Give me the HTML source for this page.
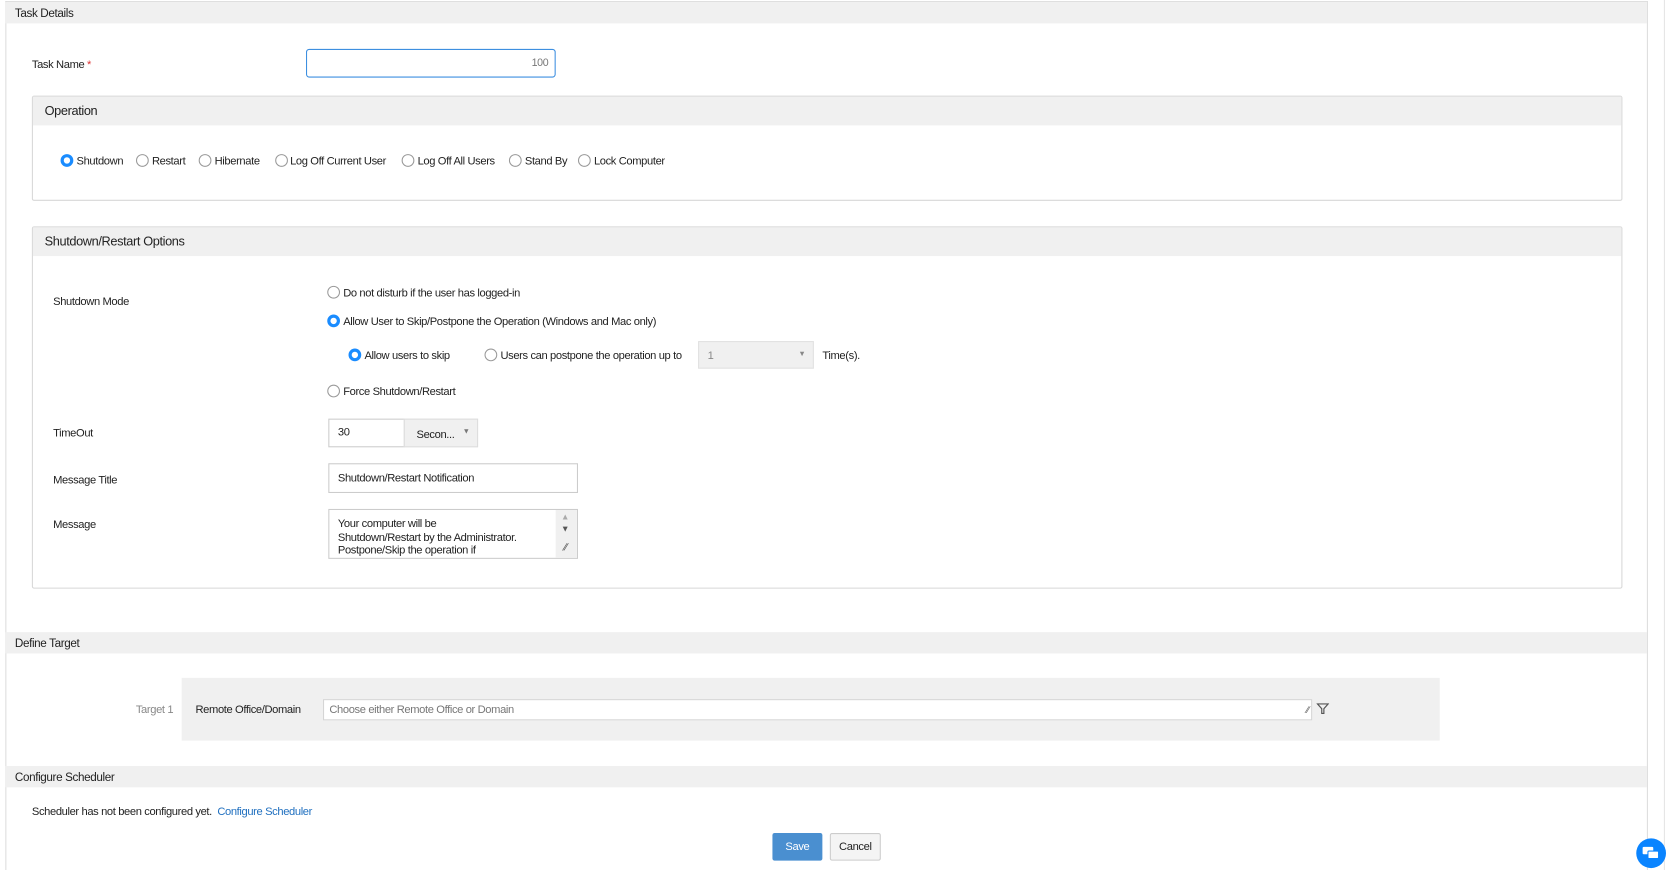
<!DOCTYPE html>
<html><head><meta charset="utf-8"><style>
*{box-sizing:border-box;margin:0;padding:0}
html,body{width:1666px;height:870px;overflow:hidden;background:#fff}
#w{position:absolute;left:0;top:0;width:1568px;height:819px;transform:scale(1.0625);transform-origin:0 0;font-family:"Liberation Sans",sans-serif;font-size:10.5px;color:#222;letter-spacing:-0.35px}
.a{position:absolute;white-space:nowrap}
.hdr{position:absolute;left:5px;width:1545px;background:#f0f0f0}
.hdr span{position:absolute;left:9px;top:5px;font-size:11px}
.pan{position:absolute;left:30px;width:1497px;border:1px solid #d8d8d8;border-radius:2px}
.pan .ph{height:27px;background:#f0f0f0;padding:6px 0 0 11px;font-size:12px}
.r{position:absolute;width:12px;height:12px;border:1px solid #999;border-radius:50%;background:#fff}
.r.on{border:3.5px solid #1a8cff}
.lt{position:absolute;white-space:nowrap;transform:translateY(-42%)}
.box{position:absolute;border:1px solid #ccc;background:#fff}
</style></head><body><div id="w">
<div class="a" style="left:5px;top:1px;width:1546px;height:818px;border:1px solid #ddd;border-bottom:none"></div>
<div class="a" style="left:1566px;top:0;width:1px;height:819px;background:#e4e4e4"></div>
<div class="hdr" style="top:2px;height:20px"><span>Task Details</span></div>
<div class="lt" style="left:30px;top:60px">Task Name <span style="color:#d33">*</span></div>
<div class="box" style="left:288px;top:46px;width:235px;height:27px;border-color:#3d8fe0;border-radius:3px"><span class="a" style="right:6px;top:7px;color:#777;font-size:10px">100</span></div>

<div class="pan" style="top:90px;height:99px"><div class="ph">Operation</div></div>
<div class="r on" style="left:57px;top:145px"></div><div class="lt" style="left:72px;top:151px">Shutdown</div>
<div class="r" style="left:128px;top:145px"></div><div class="lt" style="left:143px;top:151px">Restart</div>
<div class="r" style="left:187px;top:145px"></div><div class="lt" style="left:202px;top:151px">Hibernate</div>
<div class="r" style="left:259px;top:145px"></div><div class="lt" style="left:273px;top:151px">Log Off Current User</div>
<div class="r" style="left:378px;top:145px"></div><div class="lt" style="left:393px;top:151px">Log Off All Users</div>
<div class="r" style="left:479px;top:145px"></div><div class="lt" style="left:494px;top:151px">Stand By</div>
<div class="r" style="left:544px;top:145px"></div><div class="lt" style="left:559px;top:151px">Lock Computer</div>

<div class="pan" style="top:213px;height:341px"><div class="ph">Shutdown/Restart Options</div></div>
<div class="lt" style="left:50px;top:283px">Shutdown Mode</div>
<div class="r" style="left:308px;top:269px"></div><div class="lt" style="left:323px;top:275px">Do not disturb if the user has logged-in</div>
<div class="r on" style="left:308px;top:296px"></div><div class="lt" style="left:323px;top:302px">Allow User to Skip/Postpone the Operation (Windows and Mac only)</div>
<div class="r on" style="left:328px;top:328px"></div><div class="lt" style="left:343px;top:334px">Allow users to skip</div>
<div class="r" style="left:456px;top:328px"></div><div class="lt" style="left:471px;top:334px">Users can postpone the operation up to</div>
<div class="a" style="left:657px;top:321px;width:109px;height:26px;background:#f0f0f0;border:1px solid #e2e2e2"><span class="a" style="left:8px;top:7px;color:#888">1</span><span class="a" style="right:7px;top:8px;font-size:7px;color:#888">▼</span></div>
<div class="lt" style="left:774px;top:334px">Time(s).</div>
<div class="r" style="left:308px;top:362px"></div><div class="lt" style="left:323px;top:368px">Force Shutdown/Restart</div>

<div class="lt" style="left:50px;top:407px">TimeOut</div>
<div class="box" style="left:309px;top:394px;width:72px;height:27px"><span class="a" style="left:8px;top:6px">30</span></div>
<div class="a" style="left:380px;top:394px;width:70px;height:27px;background:#f0f0f0;border:1px solid #ddd"><span class="a" style="left:11px;top:8px">Secon...</span><span class="a" style="right:7px;top:8px;font-size:7px;color:#777">▼</span></div>
<div class="lt" style="left:50px;top:451px">Message Title</div>
<div class="box" style="left:309px;top:436px;width:235px;height:28px"><span class="a" style="left:8px;top:7px">Shutdown/Restart Notification</span></div>
<div class="lt" style="left:50px;top:493px">Message</div>
<div class="box" style="left:309px;top:479px;width:235px;height:47px;overflow:hidden"><div class="a" style="left:8px;top:7px;line-height:12.5px">Your computer will be<br>Shutdown/Restart by the Administrator.<br>Postpone/Skip the operation if</div>
<div class="a" style="right:0;top:0;width:20px;height:45px;background:#f0f0f0"><span class="a" style="left:5px;top:2px;font-size:8px;color:#aaa">▲</span><span class="a" style="left:5px;top:13px;font-size:8px;color:#555">▼</span><span class="a" style="left:8px;top:30px;font-size:10px;color:#555">∕∕</span></div></div>

<div class="hdr" style="top:595px;height:20px"><span>Define Target</span></div>
<div class="a" style="left:171px;top:638px;width:1184px;height:59px;background:#f0f0f0"></div>
<div class="lt" style="right:1405px;top:667px;color:#888">Target 1</div>
<div class="lt" style="left:184px;top:667px">Remote Office/Domain</div>
<div class="box" style="left:304px;top:658px;width:931px;height:20px;border-color:#d5d5d5"><span class="a" style="left:5px;top:3px;color:#777">Choose either Remote Office or Domain</span><span class="a" style="right:2px;top:4px;font-size:9px;color:#666">∕∕</span></div>
<svg class="a" style="left:1239px;top:661px" width="12" height="12" viewBox="0 0 12 12"><path d="M1 1.5H11L7 6V10.5H5V6Z" fill="none" stroke="#555" stroke-width="1.1"/></svg>

<div class="hdr" style="top:721px;height:20px"><span>Configure Scheduler</span></div>
<div class="lt" style="left:30px;top:763px">Scheduler has not been configured yet. &nbsp;<span style="color:#1f6fbf">Configure Scheduler</span></div>
<div class="a" style="left:727px;top:784px;width:47px;height:26px;background:#4a8fd0;border-radius:2px;color:#fff;text-align:center;line-height:26px">Save</div>
<div class="a" style="left:781px;top:784px;width:48px;height:26px;background:#f4f4f4;border:1px solid #ccc;border-radius:2px;text-align:center;line-height:24px">Cancel</div>
<div class="a" style="left:1540px;top:789px;width:28px;height:28px;border-radius:50%;background:#0a84ff"></div>
<svg class="a" style="left:1545px;top:795px" width="18" height="16" viewBox="0 0 18 16"><rect x="1" y="2" width="10" height="7" rx="1" fill="#fff"/><rect x="6" y="6" width="10" height="7" rx="1" fill="#fff" stroke="#0a84ff"/></svg>
</div></body></html>
